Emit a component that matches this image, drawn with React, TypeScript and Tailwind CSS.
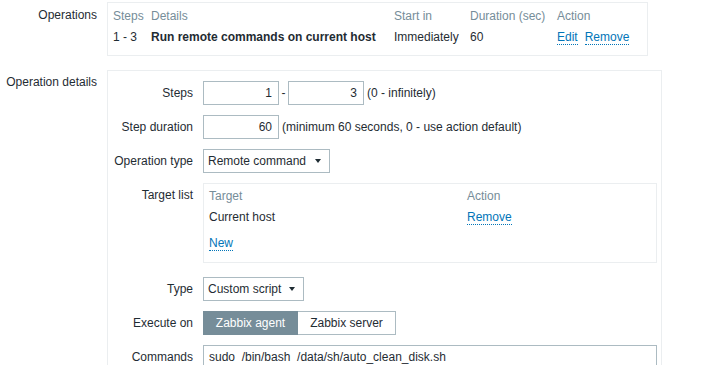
const linkCls = "text-[#0275b8] border-b border-dotted border-[#0275b8]";

function Arrow() {
  return (
    <span className="inline-block w-0 h-0 border-l-[3px] border-r-[3px] border-t-[4px] border-l-transparent border-r-transparent border-t-[#1f2c33]" />
  );
}

function Field({ value, width = "w-[76px]" }: { value: string; width?: string }) {
  return (
    <div className={`${width} h-[24px] border border-[#acbbc2] bg-white flex items-center justify-end pr-[6px]`}>
      {value}
    </div>
  );
}

function Select({ label, width }: { label: string; width: string }) {
  return (
    <div className={`${width} h-[24px] border border-[#acbbc2] bg-white flex items-center justify-between pl-[4px] pr-[8px]`}>
      <span>{label}</span>
      <Arrow />
    </div>
  );
}

export default function App() {
  return (
    <div className="min-h-screen bg-white pt-[2px] font-['Liberation_Sans',Arial,sans-serif] text-[12px] leading-[14px] text-[#1f2c33]">
      {/* Operations list */}
      <div className="flex">
        <div className="w-[107px] shrink-0 pr-[10px] pt-[6px] text-right">Operations</div>
        <div className="w-[541px] h-[54px] border border-[#ebeef0] pl-[5px] pt-[6px]">
          <div className="grid grid-cols-[38px_243px_76px_87px_auto] gap-y-[7px]">
            <div className="text-[#768d99]">Steps</div>
            <div className="text-[#768d99]">Details</div>
            <div className="text-[#768d99]">Start in</div>
            <div className="text-[#768d99]">Duration (sec)</div>
            <div className="text-[#768d99]">Action</div>
            <div>1 - 3</div>
            <div className="font-bold">Run remote commands on current host</div>
            <div>Immediately</div>
            <div>60</div>
            <div>
              <span className={linkCls}>Edit</span>
              <span className={`${linkCls} ml-[7px]`}>Remove</span>
            </div>
          </div>
        </div>
      </div>

      {/* Operation details */}
      <div className="flex mt-[14px]">
        <div className="w-[107px] shrink-0 pr-[10px] pt-[5px] text-right">Operation details</div>
        <div className="w-[555px] border border-[#ebeef0] pt-[10px] pr-[4px] pb-[30px]">
          <div className="grid grid-cols-[85px_454px] gap-x-[10px] gap-y-[10px]">
            <div className="pt-[5px] text-right">Steps</div>
            <div className="flex items-center">
              <Field value="1" />
              <span className="w-[9px] text-center">-</span>
              <Field value="3" />
              <span className="ml-[3px]">(0 - infinitely)</span>
            </div>

            <div className="pt-[5px] text-right">Step duration</div>
            <div className="flex items-center">
              <Field value="60" />
              <span className="ml-[3px]">(minimum 60 seconds, 0 - use action default)</span>
            </div>

            <div className="pt-[5px] text-right">Operation type</div>
            <div className="flex">
              <Select label="Remote command" width="w-[127px]" />
            </div>

            <div className="pt-[5px] text-right">Target list</div>
            <div className="h-[80px] border border-[#ebeef0] pl-[5px] pt-[5px] mb-[4px]">
              <div className="grid grid-cols-[258px_auto] gap-y-[7px]">
                <div className="text-[#768d99]">Target</div>
                <div className="text-[#768d99]">Action</div>
                <div>Current host</div>
                <div>
                  <span className={linkCls}>Remove</span>
                </div>
              </div>
              <div className="mt-[12px]">
                <span className={linkCls}>New</span>
              </div>
            </div>

            <div className="pt-[5px] text-right">Type</div>
            <div className="flex">
              <Select label="Custom script" width="w-[101px]" />
            </div>

            <div className="pt-[5px] text-right">Execute on</div>
            <div className="flex">
              <div className="w-[95px] h-[24px] bg-[#768d99] border border-[#768d99] text-white flex items-center justify-center">
                Zabbix agent
              </div>
              <div className="w-[98px] h-[24px] bg-white border border-l-0 border-[#acbbc2] flex items-center justify-center">
                Zabbix server
              </div>
            </div>

            <div className="pt-[5px] text-right">Commands</div>
            <div className="h-[60px] border border-[#acbbc2] pl-[5px] pt-[4px] whitespace-pre">
              sudo  /bin/bash  /data/sh/auto_clean_disk.sh
            </div>
          </div>
        </div>
      </div>
    </div>
  );
}
